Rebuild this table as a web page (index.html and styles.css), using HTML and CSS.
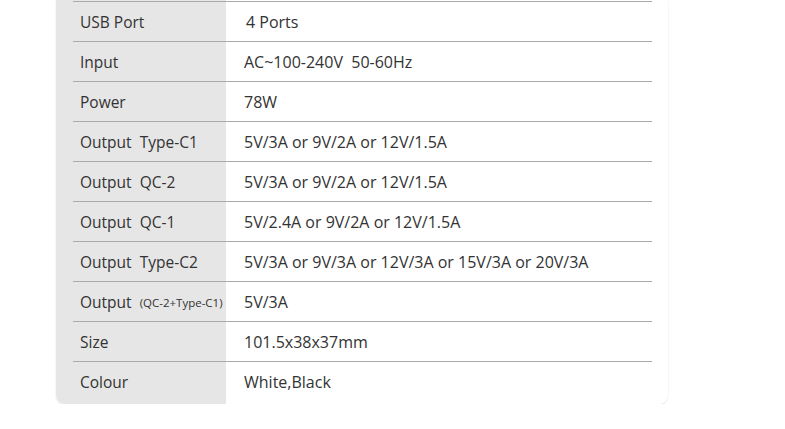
FILE: index.html
```html
<!DOCTYPE html>
<html>
<head>
<meta charset="utf-8">
<link rel="stylesheet" href="styles.css">
</head>
<body>
<div class="page">
  <div class="card">
    <div class="row"><div class="label">USB Port</div><div class="value v-shift">4 Ports</div></div>
    <div class="row"><div class="label">Input</div><div class="value">AC~100-240V  50-60Hz</div></div>
    <div class="row"><div class="label">Power</div><div class="value">78W</div></div>
    <div class="row"><div class="label">Output  Type-C1</div><div class="value">5V/3A or 9V/2A or 12V/1.5A</div></div>
    <div class="row"><div class="label">Output  QC-2</div><div class="value">5V/3A or 9V/2A or 12V/1.5A</div></div>
    <div class="row"><div class="label">Output  QC-1</div><div class="value">5V/2.4A or 9V/2A or 12V/1.5A</div></div>
    <div class="row"><div class="label">Output  Type-C2</div><div class="value">5V/3A or 9V/3A or 12V/3A or 15V/3A or 20V/3A</div></div>
    <div class="row"><div class="label">Output <span class="small">(QC-2+Type-C1)</span></div><div class="value">5V/3A</div></div>
    <div class="row"><div class="label">Size</div><div class="value">101.5x38x37mm</div></div>
    <div class="row last"><div class="label">Colour</div><div class="value">White,Black</div></div>
  </div>
</div>
</body>
</html>
```
FILE: styles.css
```css
html, body {
  margin: 0;
  padding: 0;
  background: #fff;
}
.page {
  padding-left: 56px;
  padding-top: 0;
}
.card {
  width: 612px;
  padding-top: 1px;
  padding-bottom: 3px;
  background: linear-gradient(to right, #e6e6e6 170px, #fff 170px);
  border-radius: 0 0 9px 9px;
  box-shadow: 0 1px 2px rgba(0,0,0,0.12);
  font-family: "Open Sans", "Noto Sans", sans-serif;
  color: #333;
}
.row {
  display: flex;
  align-items: center;
  height: 39px;
  margin: 0 16px 0 17px;
  border-top: 1px solid #aaa;
}
.label {
  width: 146px;
  padding-left: 7px;
  font-size: 15.5px;
  white-space: pre;
}
.value {
  padding-left: 18px;
  font-size: 16px;
  white-space: pre;
}
.v-shift {
  padding-left: 20px;
}
.small {
  font-size: 11.5px;
  margin-left: 4px;
  vertical-align: 1px;
}
```
